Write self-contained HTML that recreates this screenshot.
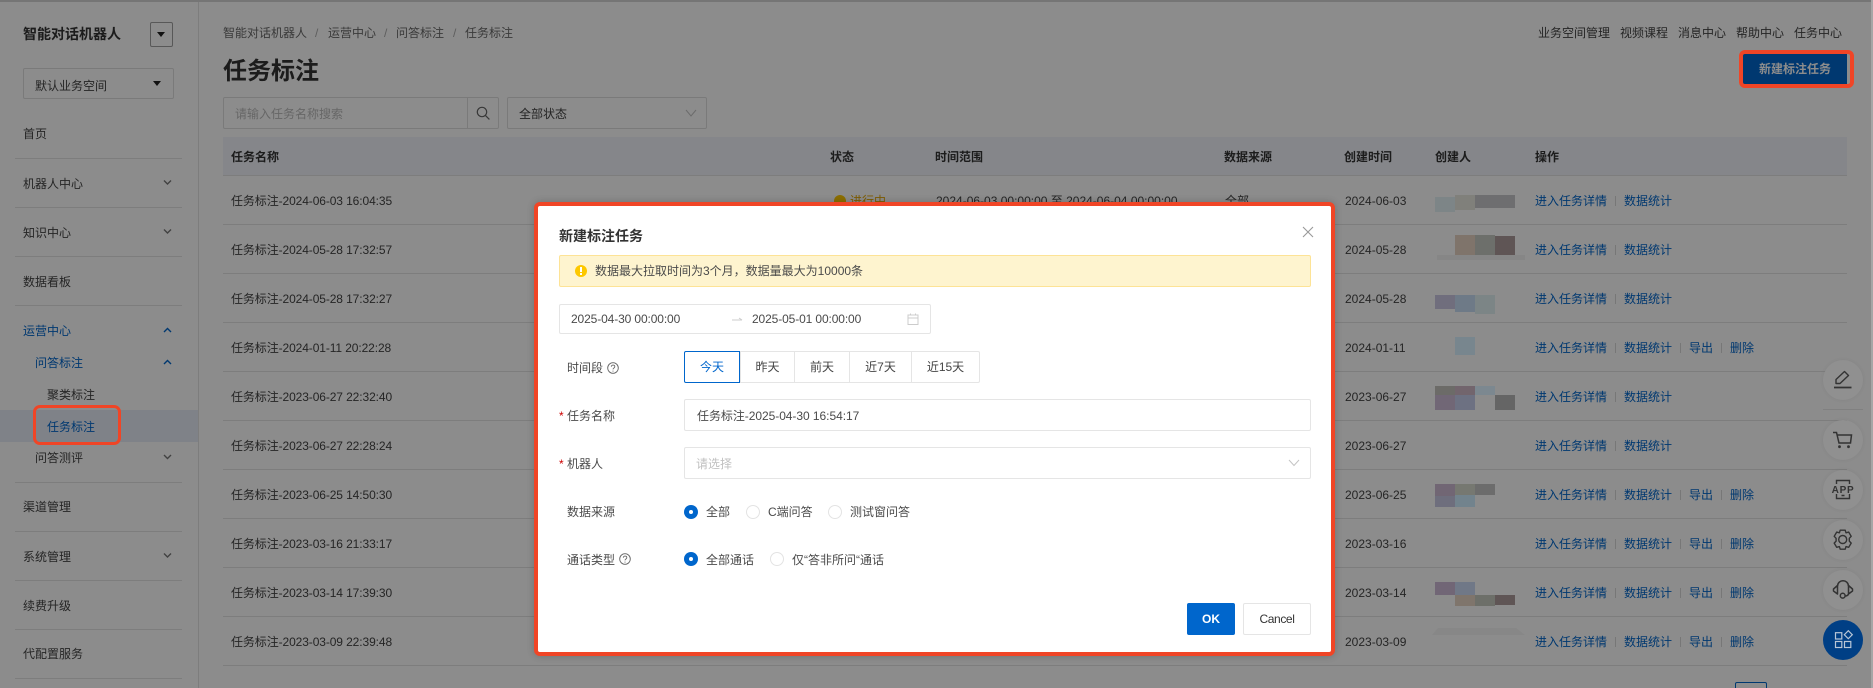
<!DOCTYPE html>
<html lang="zh-CN">
<head>
<meta charset="utf-8">
<title>任务标注</title>
<style>
html,body{margin:0;padding:0;width:1873px;height:688px;overflow:hidden;background:#fff}
body{position:relative;font-family:"Liberation Sans","Noto Sans CJK SC",sans-serif;font-size:12px;color:#444}
.t{position:absolute;white-space:nowrap;line-height:16px;height:16px}
.b{position:absolute;box-sizing:border-box}
.hl{position:absolute;height:1px;background:#e4e4e4;left:223px;width:1624px}
.sl{position:absolute;height:1px;background:#e4e4e4;left:15px;width:167px}
.bl{color:#0066cc}
.dv{position:absolute;width:1px;height:10px;background:#d9d9d9}
#overlay{position:absolute;left:0;top:0;width:1873px;height:688px;background:rgba(0,0,0,.45)}
.mo{position:absolute;box-sizing:border-box;filter:brightness(.89)}
.fab{position:absolute;left:1823px;width:40px;height:40px;border-radius:50%;background:#909090;box-shadow:0 0 4px rgba(0,0,0,.06)}
.fab svg{position:absolute;left:0;top:0}
.r{position:absolute;width:14px;height:14px;box-sizing:border-box;border-radius:50%;border:1px solid #e3e3e3;background:#fff}
.r.on{background:#0066cc;border:none}
.r.on:after{content:"";position:absolute;left:5px;top:5px;width:4px;height:4px;border-radius:50%;background:#fff}
.ipt{position:absolute;box-sizing:border-box;border:1px solid #e5e5e5;border-radius:2px;background:#fff}
.seg{position:absolute;top:351px;height:32px;box-sizing:border-box;border:1px solid #e5e5e5;margin-left:-1px;text-align:center;line-height:30px;background:#fff;color:#444}
.m{color:#4a4a4a}
</style>
</head>
<body>

<!-- sidebar -->
<div class="b" style="left:198px;top:0;width:1px;height:688px;background:#e4e4e4"></div>
<div class="t" style="left:23px;top:26px;font-size:14px;font-weight:bold;color:#333">智能对话机器人</div>
<div class="b" style="left:150px;top:22px;width:23px;height:25px;border:1px solid #a0a0a0;border-radius:2px;"></div>
<div class="b" style="left:157px;top:32px;width:0;height:0;border-left:4px solid transparent;border-right:4px solid transparent;border-top:5px solid #222;"></div>
<div class="b" style="left:23px;top:68px;width:151px;height:31px;border:1px solid #dedede;border-radius:2px;"></div>
<div class="t" style="left:35px;top:78px;">默认业务空间</div>
<div class="b" style="left:153px;top:81px;width:0;height:0;border-left:4px solid transparent;border-right:4px solid transparent;border-top:5px solid #222;"></div>

<div class="t" style="left:23px;top:126px;">首页</div>
<div class="sl" style="top:158px"></div>
<div class="t" style="left:23px;top:176px;">机器人中心</div>
<div class="sl" style="top:207px"></div>
<div class="t" style="left:23px;top:225px;">知识中心</div>
<div class="sl" style="top:256px"></div>
<div class="t" style="left:23px;top:274px;">数据看板</div>
<div class="sl" style="top:305px"></div>
<div class="t bl" style="left:23px;top:323px;">运营中心</div>
<div class="t bl" style="left:35px;top:355px;">问答标注</div>
<div class="t" style="left:47px;top:387px;">聚类标注</div>
<div class="b" style="left:0;top:410px;width:198px;height:32px;background:#e8edf8"></div>
<div class="t bl" style="left:47px;top:419px;">任务标注</div>
<div class="t" style="left:35px;top:450px;">问答测评</div>
<div class="sl" style="top:482px"></div>
<div class="t" style="left:23px;top:499px;">渠道管理</div>
<div class="sl" style="top:531px"></div>
<div class="t" style="left:23px;top:549px;">系统管理</div>
<div class="sl" style="top:580px"></div>
<div class="t" style="left:23px;top:598px;">续费升级</div>
<div class="sl" style="top:629px"></div>
<div class="t" style="left:23px;top:646px;">代配置服务</div>
<div class="sl" style="top:678px"></div>

<svg class="b" style="left:0;top:0" width="199" height="688" fill="none" stroke-width="1.4">
<path d="M164 180.500l3.500 3.500 3.500-3.500M164 229.500l3.500 3.500 3.500-3.500M164 455l3.500 3.500 3.500-3.500M164 553.500l3.500 3.500 3.500-3.500" stroke="#777"/>
<path d="M164 332l3.500-3.500 3.500 3.500M164 364l3.500-3.500 3.500 3.500" stroke="#0066cc"/>
</svg>

<!-- header -->
<div class="t" style="left:223px;top:25px;color:#6a6a6a">智能对话机器人</div>
<div class="t" style="left:315px;top:25px;color:#aaa">/</div>
<div class="t" style="left:328px;top:25px;color:#6a6a6a">运营中心</div>
<div class="t" style="left:384px;top:25px;color:#aaa">/</div>
<div class="t" style="left:396px;top:25px;color:#6a6a6a">问答标注</div>
<div class="t" style="left:453px;top:25px;color:#aaa">/</div>
<div class="t" style="left:465px;top:25px;color:#6a6a6a">任务标注</div>

<div class="t" style="left:223px;top:56px;font-size:24px;font-weight:bold;line-height:32px;height:32px;color:#333">任务标注</div>

<div class="t" style="left:1538px;top:25px;">业务空间管理</div>
<div class="t" style="left:1620px;top:25px;">视频课程</div>
<div class="t" style="left:1678px;top:25px;">消息中心</div>
<div class="t" style="left:1736px;top:25px;">帮助中心</div>
<div class="t" style="left:1794px;top:25px;">任务中心</div>

<!-- filters -->
<div class="b" style="left:223px;top:97px;width:276px;height:32px;border:1px solid #dedede;border-radius:2px;"></div>
<div class="b" style="left:467px;top:97px;width:1px;height:32px;background:#dedede"></div>
<div class="t" style="left:235px;top:106px;color:#bbb">请输入任务名称搜索</div>
<svg class="b" style="left:475px;top:105px" width="16" height="16" fill="none" stroke="#666" stroke-width="1.2"><circle cx="7" cy="7" r="4.700"/><path d="M10.400 10.400l4 4"/></svg>
<div class="b" style="left:507px;top:97px;width:200px;height:32px;border:1px solid #dedede;border-radius:2px;"></div>
<div class="t" style="left:519px;top:106px;">全部状态</div>
<svg class="b" style="left:684px;top:109px" width="14" height="9" fill="none" stroke="#c4c4c4" stroke-width="1"><path d="M2 1l5 6 5-6"/></svg>

<!-- table -->
<div class="b" style="left:223px;top:137px;width:1624px;height:39px;background:#f2f5fc"></div>
<div class="t" style="left:231px;top:149px;font-weight:bold;color:#333">任务名称</div>
<div class="t" style="left:830px;top:149px;font-weight:bold;color:#333">状态</div>
<div class="t" style="left:935px;top:149px;font-weight:bold;color:#333">时间范围</div>
<div class="t" style="left:1224px;top:149px;font-weight:bold;color:#333">数据来源</div>
<div class="t" style="left:1344px;top:149px;font-weight:bold;color:#333">创建时间</div>
<div class="t" style="left:1435px;top:149px;font-weight:bold;color:#333">创建人</div>
<div class="t" style="left:1535px;top:149px;font-weight:bold;color:#333">操作</div>

<div class="hl" style="top:175px"></div><div class="hl" style="top:224px"></div><div class="hl" style="top:273px"></div><div class="hl" style="top:322px"></div><div class="hl" style="top:371px"></div><div class="hl" style="top:420px"></div><div class="hl" style="top:469px"></div><div class="hl" style="top:518px"></div><div class="hl" style="top:567px"></div><div class="hl" style="top:616px"></div><div class="hl" style="top:665px"></div>

<div class="b" style="left:834px;top:195px;width:12px;height:12px;border-radius:50%;background:#ffc800"></div>
<div class="t" style="left:850px;top:193px;color:#e6a800">进行中</div>
<div class="t" style="left:936px;top:193px;">2024-06-03 00:00:00 至 2024-06-04 00:00:00</div>
<div class="t" style="left:1225px;top:193px;">全部</div>

<div class="t" style="left:231px;top:193px;letter-spacing:-.1px">任务标注-2024-06-03 16:04:35</div>
<div class="t" style="left:231px;top:242px;letter-spacing:-.1px">任务标注-2024-05-28 17:32:57</div>
<div class="t" style="left:231px;top:291px;letter-spacing:-.1px">任务标注-2024-05-28 17:32:27</div>
<div class="t" style="left:231px;top:340px;letter-spacing:-.1px">任务标注-2024-01-11 20:22:28</div>
<div class="t" style="left:231px;top:389px;letter-spacing:-.1px">任务标注-2023-06-27 22:32:40</div>
<div class="t" style="left:231px;top:438px;letter-spacing:-.1px">任务标注-2023-06-27 22:28:24</div>
<div class="t" style="left:231px;top:487px;letter-spacing:-.1px">任务标注-2023-06-25 14:50:30</div>
<div class="t" style="left:231px;top:536px;letter-spacing:-.1px">任务标注-2023-03-16 21:33:17</div>
<div class="t" style="left:231px;top:585px;letter-spacing:-.1px">任务标注-2023-03-14 17:39:30</div>
<div class="t" style="left:231px;top:634px;letter-spacing:-.1px">任务标注-2023-03-09 22:39:48</div>

<div class="t" style="left:1345px;top:193px;">2024-06-03</div>
<div class="t" style="left:1345px;top:242px;">2024-05-28</div>
<div class="t" style="left:1345px;top:291px;">2024-05-28</div>
<div class="t" style="left:1345px;top:340px;">2024-01-11</div>
<div class="t" style="left:1345px;top:389px;">2023-06-27</div>
<div class="t" style="left:1345px;top:438px;">2023-06-27</div>
<div class="t" style="left:1345px;top:487px;">2023-06-25</div>
<div class="t" style="left:1345px;top:536px;">2023-03-16</div>
<div class="t" style="left:1345px;top:585px;">2023-03-14</div>
<div class="t" style="left:1345px;top:634px;">2023-03-09</div>

<!-- row links -->
<div class="t bl" style="left:1535px;top:193px;">进入任务详情</div><div class="dv" style="left:1615px;top:196px"></div><div class="t bl" style="left:1624px;top:193px;">数据统计</div>
<div class="t bl" style="left:1535px;top:242px;">进入任务详情</div><div class="dv" style="left:1615px;top:245px"></div><div class="t bl" style="left:1624px;top:242px;">数据统计</div>
<div class="t bl" style="left:1535px;top:291px;">进入任务详情</div><div class="dv" style="left:1615px;top:294px"></div><div class="t bl" style="left:1624px;top:291px;">数据统计</div>
<div class="t bl" style="left:1535px;top:340px;">进入任务详情</div><div class="dv" style="left:1615px;top:343px"></div><div class="t bl" style="left:1624px;top:340px;">数据统计</div><div class="dv" style="left:1680px;top:343px"></div><div class="t bl" style="left:1689px;top:340px;">导出</div><div class="dv" style="left:1721px;top:343px"></div><div class="t bl" style="left:1730px;top:340px;">删除</div>
<div class="t bl" style="left:1535px;top:389px;">进入任务详情</div><div class="dv" style="left:1615px;top:392px"></div><div class="t bl" style="left:1624px;top:389px;">数据统计</div>
<div class="t bl" style="left:1535px;top:438px;">进入任务详情</div><div class="dv" style="left:1615px;top:441px"></div><div class="t bl" style="left:1624px;top:438px;">数据统计</div>
<div class="t bl" style="left:1535px;top:487px;">进入任务详情</div><div class="dv" style="left:1615px;top:490px"></div><div class="t bl" style="left:1624px;top:487px;">数据统计</div><div class="dv" style="left:1680px;top:490px"></div><div class="t bl" style="left:1689px;top:487px;">导出</div><div class="dv" style="left:1721px;top:490px"></div><div class="t bl" style="left:1730px;top:487px;">删除</div>
<div class="t bl" style="left:1535px;top:536px;">进入任务详情</div><div class="dv" style="left:1615px;top:539px"></div><div class="t bl" style="left:1624px;top:536px;">数据统计</div><div class="dv" style="left:1680px;top:539px"></div><div class="t bl" style="left:1689px;top:536px;">导出</div><div class="dv" style="left:1721px;top:539px"></div><div class="t bl" style="left:1730px;top:536px;">删除</div>
<div class="t bl" style="left:1535px;top:585px;">进入任务详情</div><div class="dv" style="left:1615px;top:588px"></div><div class="t bl" style="left:1624px;top:585px;">数据统计</div><div class="dv" style="left:1680px;top:588px"></div><div class="t bl" style="left:1689px;top:585px;">导出</div><div class="dv" style="left:1721px;top:588px"></div><div class="t bl" style="left:1730px;top:585px;">删除</div>
<div class="t bl" style="left:1535px;top:634px;">进入任务详情</div><div class="dv" style="left:1615px;top:637px"></div><div class="t bl" style="left:1624px;top:634px;">数据统计</div><div class="dv" style="left:1680px;top:637px"></div><div class="t bl" style="left:1689px;top:634px;">导出</div><div class="dv" style="left:1721px;top:637px"></div><div class="t bl" style="left:1730px;top:634px;">删除</div>

<!-- new button -->
<div class="b" style="left:1743px;top:54px;width:104px;height:30px;background:#0066cc"></div>
<div class="t" style="left:1759px;top:61px;color:#fff;font-weight:bold">新建标注任务</div>

<!-- pagination fragment -->
<div class="b" style="left:1735px;top:682px;width:32px;height:20px;border:1px solid #0066cc;border-radius:2px;"></div>

<div id="overlay"></div>
<div class="b" style="left:0;top:0;width:1873px;height:2px;background:#757575"></div>
<div class="b" style="left:1871px;top:0;width:2px;height:688px;background:#a6a6a6"></div>

<!-- floating buttons -->
<div class="b" style="left:1823px;top:409px;width:40px;height:1px;background:#808080"></div>
<div class="fab" style="top:360px"><svg width="40" height="40" fill="none" stroke="#333" stroke-width="1.4" stroke-linejoin="round"><path d="M13 23.500v-4l8.500-8 4 4-8.500 8z"/><path d="M11 27.500h17.500" stroke-width="1.700"/></svg></div>
<div class="fab" style="top:420px"><svg width="40" height="40" fill="none" stroke="#333" stroke-width="1.500"><path d="M10 12.500h3.500l2.500 10.500h11.500l1-8H14.500"/><circle cx="16.500" cy="26.700" r="1.400" fill="#333" stroke="none"/><circle cx="25.500" cy="26.700" r="1.400" fill="#333" stroke="none"/></svg></div>
<div class="fab" style="top:470px"><svg width="40" height="40" fill="none" stroke="#333" stroke-width="1.400"><path d="M13.500 14v-3.500h13V14M13.500 24v4.500h13V24"/><path d="M18.500 25.500h3" stroke-width="1.500"/><text x="20" y="23" text-anchor="middle" font-family="Liberation Sans" font-size="10" font-weight="bold" fill="#333" stroke="none" letter-spacing=".7">APP</text></svg></div>
<div class="fab" style="top:520px"><svg width="40" height="40" fill="none" stroke="#333" stroke-width="1.400"><circle cx="19.700" cy="19.500" r="4"/><path d="M17.200 10.200h5l.8 2.600 2.700-.7 2.500 4.200-1.900 2v2.800l1.900 2-2.500 4.200-2.700-.7-.8 2.600h-5l-.8-2.600-2.700.7-2.500-4.200 1.900-2v-2.800l-1.900-2 2.500-4.200 2.700.7z" stroke-linejoin="round"/></svg></div>
<div class="fab" style="top:570px"><svg width="40" height="40" fill="none" stroke="#333" stroke-width="1.500"><path d="M14.500 16c.5-7 10.500-7 11 0"/><path d="M14.500 15.500l-4 3.500v2l4 3zM25.500 15.500l4 3.500v2l-4 3z" stroke-linejoin="round"/><path d="M25.500 24c-.5 1.500-1.500 2-3.500 2"/><circle cx="19.700" cy="25.700" r="2.400"/></svg></div>
<div class="fab" style="top:620px;background:#003f85;box-shadow:none"><svg width="40" height="40" fill="none" stroke="#b8c6d6" stroke-width="1.200"><rect x="12.500" y="12.700" width="6.300" height="6.300"/><rect x="12.500" y="21.500" width="6.300" height="6"/><rect x="21.500" y="21.500" width="6.300" height="6"/><path d="M25.300 10.700l4 4-4 4-4-4z"/></svg></div>

<!-- mosaics above overlay -->
<div class="mo" style="left:1435px;top:197px;width:20px;height:15px;background:#8d9598"></div>
<div class="mo" style="left:1455px;top:195px;width:20px;height:15px;background:#90908a"></div>
<div class="mo" style="left:1475px;top:195px;width:40px;height:13px;background:#7c7c7e"></div>
<div class="b" style="left:1437px;top:255px;width:88px;height:5px;background:#868686"></div>
<div class="mo" style="left:1455px;top:235px;width:20px;height:20px;background:#8f8278"></div>
<div class="mo" style="left:1475px;top:235px;width:20px;height:20px;background:#7b7d78"></div>
<div class="mo" style="left:1495px;top:236px;width:20px;height:19px;background:#6b6060"></div>
<div class="mo" style="left:1435px;top:295px;width:20px;height:14px;background:#7e7c8d"></div>
<div class="mo" style="left:1455px;top:295px;width:20px;height:17px;background:#7c8998"></div>
<div class="mo" style="left:1475px;top:295px;width:20px;height:19px;background:#8b9596"></div>
<div class="mo" style="left:1455px;top:337px;width:20px;height:18px;background:#87979f"></div>
<div class="mo" style="left:1435px;top:386px;width:20px;height:9px;background:#797875"></div>
<div class="mo" style="left:1455px;top:386px;width:20px;height:9px;background:#80727b"></div>
<div class="mo" style="left:1475px;top:386px;width:20px;height:9px;background:#8b99a2"></div>
<div class="mo" style="left:1435px;top:395px;width:20px;height:15px;background:#7f7485"></div>
<div class="mo" style="left:1455px;top:395px;width:20px;height:15px;background:#7b7f92"></div>
<div class="mo" style="left:1495px;top:395px;width:20px;height:15px;background:#717171"></div>
<div class="mo" style="left:1435px;top:484px;width:20px;height:12px;background:#7f7382"></div>
<div class="mo" style="left:1455px;top:484px;width:20px;height:11px;background:#85877f"></div>
<div class="mo" style="left:1475px;top:484px;width:20px;height:11px;background:#797979"></div>
<div class="mo" style="left:1435px;top:496px;width:20px;height:11px;background:#7c7c8c"></div>
<div class="mo" style="left:1455px;top:495px;width:20px;height:12px;background:#80939e"></div>
<div class="mo" style="left:1435px;top:582px;width:20px;height:13px;background:#7f7385"></div>
<div class="mo" style="left:1455px;top:582px;width:20px;height:13px;background:#7e8798"></div>
<div class="mo" style="left:1455px;top:595px;width:20px;height:11px;background:#8f8479"></div>
<div class="mo" style="left:1475px;top:595px;width:20px;height:11px;background:#7b7d76"></div>
<div class="mo" style="left:1495px;top:595px;width:20px;height:10px;background:#6b6060"></div>
<svg class="b" style="left:1432px;top:628px" width="94" height="8"><path d="M6 0h78l9 7H0z" fill="#878787"/></svg>

<!-- red annotations on page -->
<div class="b" style="left:33px;top:405px;width:88px;height:40px;border:3px solid #f04526;border-radius:7px;"></div>
<div class="b" style="left:1739px;top:50px;width:115px;height:38px;border:4px solid #f04526;border-radius:6px;"></div>

<!-- modal -->
<div class="b" style="left:534px;top:202px;width:801px;height:454px;background:#fff;border:4px solid #f04526;border-radius:6px;box-shadow:0 0 8px rgba(0,0,0,.2)"></div>

<div class="t" style="left:559px;top:228px;font-size:14px;font-weight:bold;color:#333">新建标注任务</div>
<svg class="b" style="left:1302px;top:226px" width="12" height="12" fill="none" stroke="#999" stroke-width="1.100"><path d="M1 1l10 10M11 1L1 11"/></svg>

<div class="b" style="left:559px;top:255px;width:752px;height:32px;background:#fef4cf;border:1px solid #fde396;border-radius:2px;"></div>
<div class="b" style="left:575px;top:265px;width:12px;height:12px;border-radius:50%;background:#fdc800;"></div>
<div class="b" style="left:580px;top:267px;width:2px;height:5px;background:#fff"></div>
<div class="b" style="left:580px;top:273px;width:2px;height:2px;background:#fff"></div>
<div class="t m" style="left:595px;top:263px;">数据最大拉取时间为3个月，数据量最大为10000条</div>

<div class="ipt" style="left:559px;top:304px;width:372px;height:30px"></div>
<div class="t m" style="left:571px;top:311px;letter-spacing:-.12px">2025-04-30 00:00:00</div>
<svg class="b" style="left:731px;top:315px" width="12" height="8" fill="none" stroke="#ccc" stroke-width="1"><path d="M1 5h10M8 3l3 2"/></svg>
<div class="t m" style="left:752px;top:311px;letter-spacing:-.12px">2025-05-01 00:00:00</div>
<svg class="b" style="left:907px;top:313px" width="12" height="12" fill="none" stroke="#ccc" stroke-width="1"><rect x="1" y="2" width="10" height="9.500"/><path d="M1 5h10M3.500 .5v2M8.500 .5v2"/></svg>

<div class="t m" style="left:567px;top:360px;">时间段</div>
<svg class="b" style="left:607px;top:362px" width="12" height="12" fill="none" stroke="#666" stroke-width=".9"><circle cx="6" cy="6" r="5.300"/><path d="M4.300 4.700c0-2.200 3.500-2.200 3.500 0 0 1.300-1.800 1.300-1.800 2.700"/><path d="M6 8.600v1"/></svg>

<div class="seg" style="left:685px;width:56px;border-color:#0066cc;color:#0066cc;z-index:2;border-radius:2px 0 0 2px">今天</div>
<div class="seg" style="left:741px;width:55px">昨天</div>
<div class="seg" style="left:795px;width:56px">前天</div>
<div class="seg" style="left:850px;width:63px">近7天</div>
<div class="seg" style="left:912px;width:69px;border-radius:0 2px 2px 0">近15天</div>

<div class="t" style="left:559px;top:408px;color:#c00">*</div>
<div class="t m" style="left:567px;top:408px;">任务名称</div>
<div class="ipt" style="left:684px;top:399px;width:627px;height:32px"></div>
<div class="t m" style="left:697px;top:408px;letter-spacing:-.05px">任务标注-2025-04-30 16:54:17</div>

<div class="t" style="left:559px;top:456px;color:#c00">*</div>
<div class="t m" style="left:567px;top:456px;">机器人</div>
<div class="ipt" style="left:684px;top:447px;width:627px;height:32px"></div>
<div class="t" style="left:696px;top:456px;color:#c0c0c0">请选择</div>
<svg class="b" style="left:1288px;top:459px" width="12" height="8" fill="none" stroke="#c4c4c4" stroke-width="1"><path d="M1 1l5 5.500L11 1"/></svg>

<div class="t m" style="left:567px;top:504px;">数据来源</div>
<div class="r on" style="left:684px;top:505px"></div>
<div class="t m" style="left:706px;top:504px;">全部</div>
<div class="r" style="left:746px;top:505px"></div>
<div class="t m" style="left:768px;top:504px;">C端问答</div>
<div class="r" style="left:828px;top:505px"></div>
<div class="t m" style="left:850px;top:504px;">测试窗问答</div>

<div class="t m" style="left:567px;top:552px;">通话类型</div>
<svg class="b" style="left:619px;top:553px" width="12" height="12" fill="none" stroke="#666" stroke-width=".9"><circle cx="6" cy="6" r="5.300"/><path d="M4.300 4.700c0-2.200 3.500-2.200 3.500 0 0 1.300-1.800 1.300-1.800 2.700"/><path d="M6 8.600v1"/></svg>
<div class="r on" style="left:684px;top:552px"></div>
<div class="t m" style="left:706px;top:552px;">全部通话</div>
<div class="r" style="left:770px;top:552px"></div>
<div class="t m" style="left:792px;top:552px;">仅“答非所问“通话</div>

<div class="b" style="left:1187px;top:603px;width:48px;height:32px;background:#0066cc;border-radius:2px;color:#fff;font-weight:bold;text-align:center;line-height:32px;">OK</div>
<div class="b" style="left:1243px;top:603px;width:68px;height:32px;background:#fff;border:1px solid #e5e5e5;border-radius:2px;text-align:center;line-height:30px;letter-spacing:-.4px;color:#333">Cancel</div>

</body>
</html>
